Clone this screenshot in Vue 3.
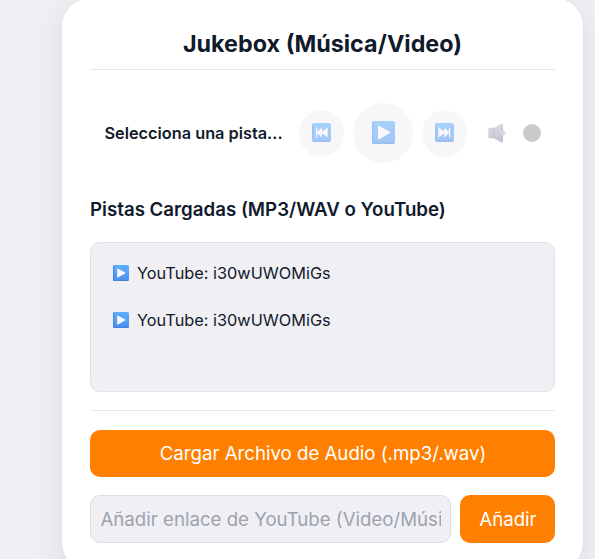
<script setup>
const title = 'Jukebox (Música/Video)'
const tracks = ['YouTube: i30wUWOMiGs', 'YouTube: i30wUWOMiGs']
</script>

<template>
  <main class="page">
    <svg class="defs" width="0" height="0" aria-hidden="true">
      <defs>
        <linearGradient id="tile" x1="0" y1="0" x2="0" y2="1">
          <stop offset="0" stop-color="#5caffc" />
          <stop offset="1" stop-color="#4d91ee" />
        </linearGradient>
        <linearGradient id="tileFaded" x1="0" y1="0" x2="0.3" y2="1">
          <stop offset="0" stop-color="#a5d5fa" />
          <stop offset="1" stop-color="#a3c6f5" />
        </linearGradient>
        <linearGradient id="cone" x1="0" y1="0" x2="0" y2="1">
          <stop offset="0" stop-color="#dcdadf" />
          <stop offset="0.6" stop-color="#d3ced9" />
          <stop offset="1" stop-color="#c5bad0" />
        </linearGradient>
      </defs>
    </svg>
    <section class="card">
      <h1 class="title">{{ title }}</h1>
      <div class="player">
        <span class="now">Selecciona una pista...</span>
        <button class="round" aria-label="Anterior">
          <svg width="19" height="19" viewBox="0 0 19 19">
            <rect width="19" height="19" rx="2" fill="url(#tileFaded)" />
            <path d="M.8 1v17.2h17.2" fill="none" stroke="#9bbcf0" stroke-width="1" />
            <path d="M4 4.8h1.3v3.9L10 4.5v3.9l5.8-4.2v10.4L10 10.4v4L5.3 10.2v4H4z" fill="#f9f6fd" />
          </svg>
        </button>
        <button class="round big" aria-label="Reproducir">
          <svg width="23" height="23" viewBox="0 0 23 23">
            <rect width="23" height="23" rx="2" fill="url(#tileFaded)" />
            <path d="M.9 1v21.1h21.1" fill="none" stroke="#9bbcf0" stroke-width="1.2" />
            <path d="M6 5.4q0-1.2 1.1-.7l10.5 6q1 .8 0 1.5l-10.5 6q-1.1.4-1.1-.8z" fill="#f9f6fd" />
          </svg>
        </button>
        <button class="round" aria-label="Siguiente">
          <svg width="19" height="19" viewBox="0 0 19 19">
            <rect width="19" height="19" rx="2" fill="url(#tileFaded)" />
            <path d="M.8 1v17.2h17.2" fill="none" stroke="#9bbcf0" stroke-width="1" />
            <path d="M15.2 4.8h-1.3v3.9L9.2 4.5v3.9L3.4 4.2v10.4l5.8-4.2v4l4.7-4.2v4h1.3z" fill="#f9f6fd" />
          </svg>
        </button>
        <svg class="speaker" width="18" height="20" viewBox="0 0 18 20">
          <path d="M1.3 4.7Q.4 4.7.4 5.8v8.4q0 1.1.9 1.1h4.9l6.9 4q1.3.6 1.6-.6.9-8.7 0-17.4-.3-1.2-1.6-.6L6.2 4.7z" fill="url(#cone)" />
          <path d="M5.9 4.9v10.3" stroke="#bdb6c5" stroke-width=".8" />
          <path d="M14.3 1.4q.9 8.6 0 17.2" fill="none" stroke="#c3bbcd" stroke-width=".8" />
          <circle cx="15.3" cy="10" r="2.3" fill="#dedae4" />
        </svg>
        <span class="knob"></span>
      </div>
      <h2 class="subtitle">Pistas Cargadas (MP3/WAV o YouTube)</h2>
      <ul class="list">
        <li v-for="(track, i) in tracks" :key="i" class="track">
          <svg width="16" height="16" viewBox="0 0 16 16">
            <rect width="16" height="16" rx="1.5" fill="url(#tile)" />
            <path d="M.6.6v14.8h14.8" fill="none" stroke="#427ddc" stroke-width=".9" />
            <path d="M4.2 3.9q0-.7.7-.4l7.2 4q.7.5 0 1l-7.2 4q-.7.3-.7-.4z" fill="#fbf6ff" />
          </svg>
          <span>{{ track }}</span>
        </li>
      </ul>
      <div class="actions">
        <button class="primary">Cargar Archivo de Audio (.mp3/.wav)</button>
        <div class="row">
          <input class="field" type="text" placeholder="Añadir enlace de YouTube (Video/Música)" />
          <button class="primary add">Añadir</button>
        </div>
      </div>
    </section>
  </main>
</template>

<style>
body {
  background: #f0eff4;
  overflow: hidden;
}
</style>

<style scoped>
.page {
  height: 559px;
  overflow: hidden;
  font-family: Inter, "Liberation Sans", sans-serif;
  color: #111a2c;
}
.defs {
  display: block;
}
button,
input {
  font: inherit;
  border: 0;
  margin: 0;
}
.card {
  box-sizing: border-box;
  width: 521px;
  height: 573px;
  margin: -2px 0 0 62px;
  padding: 29px 28px;
  border-radius: 28px;
  background: #fff;
  box-shadow: 0 9px 35px rgba(20, 18, 45, 0.09), 0 0 1px rgba(20, 18, 60, 0.12);
}
.title {
  box-sizing: border-box;
  height: 43px;
  margin: 0;
  border-bottom: 1px solid #e5e5ed;
  font-size: 23.35px;
  line-height: 34px;
  font-weight: 700;
  text-align: center;
}
.player {
  display: flex;
  align-items: center;
  height: 60px;
  margin-top: 33px;
  padding-left: 14.5px;
}
.now {
  width: 194.5px;
  font-size: 16.3px;
  font-weight: 600;
  white-space: nowrap;
}
.round {
  display: grid;
  place-items: center;
  flex: none;
  width: 45px;
  height: 47px;
  padding: 0 0 1px;
  border-radius: 50%;
  background: #f7f7fa;
}
.round.big {
  width: 60px;
  height: 60px;
  margin: 0 9px;
}
.speaker {
  margin-left: 21px;
}
.knob {
  width: 18px;
  height: 18px;
  margin-left: 17px;
  border-radius: 50%;
  background: #cacaca;
}
.subtitle {
  margin: 33px 0 0;
  height: 46px;
  font-size: 18.7px;
  line-height: 28px;
  font-weight: 600;
}
.list {
  box-sizing: border-box;
  height: 150px;
  margin: 0;
  padding: 6px 22px;
  border: 1px solid #e2e1e9;
  border-radius: 10px;
  background: #f0eff4;
  list-style: none;
}
.track {
  display: flex;
  align-items: center;
  gap: 8px;
  height: 47px;
  font-size: 16.3px;
}
.actions {
  margin-top: 18px;
  padding-top: 19px;
  border-top: 1px solid #e8e7f0;
}
.primary {
  display: block;
  width: 100%;
  height: 47px;
  padding: 0 0 1px 1px;
  border-radius: 10px;
  background: #ff8000;
  color: #fff;
  font-size: 18.65px;
}
.row {
  display: flex;
  gap: 9px;
  margin-top: 18px;
}
.field {
  box-sizing: border-box;
  flex: 1;
  min-width: 0;
  height: 48px;
  padding: 0 9px 0 9.5px;
  border: 1px solid #dddce7;
  border-radius: 10px;
  background: #f0eff4;
  font-size: 18.65px;
}
.field::placeholder {
  color: #9ca3af;
  opacity: 1;
}
.primary.add {
  width: 95px;
  height: 48px;
}
</style>
